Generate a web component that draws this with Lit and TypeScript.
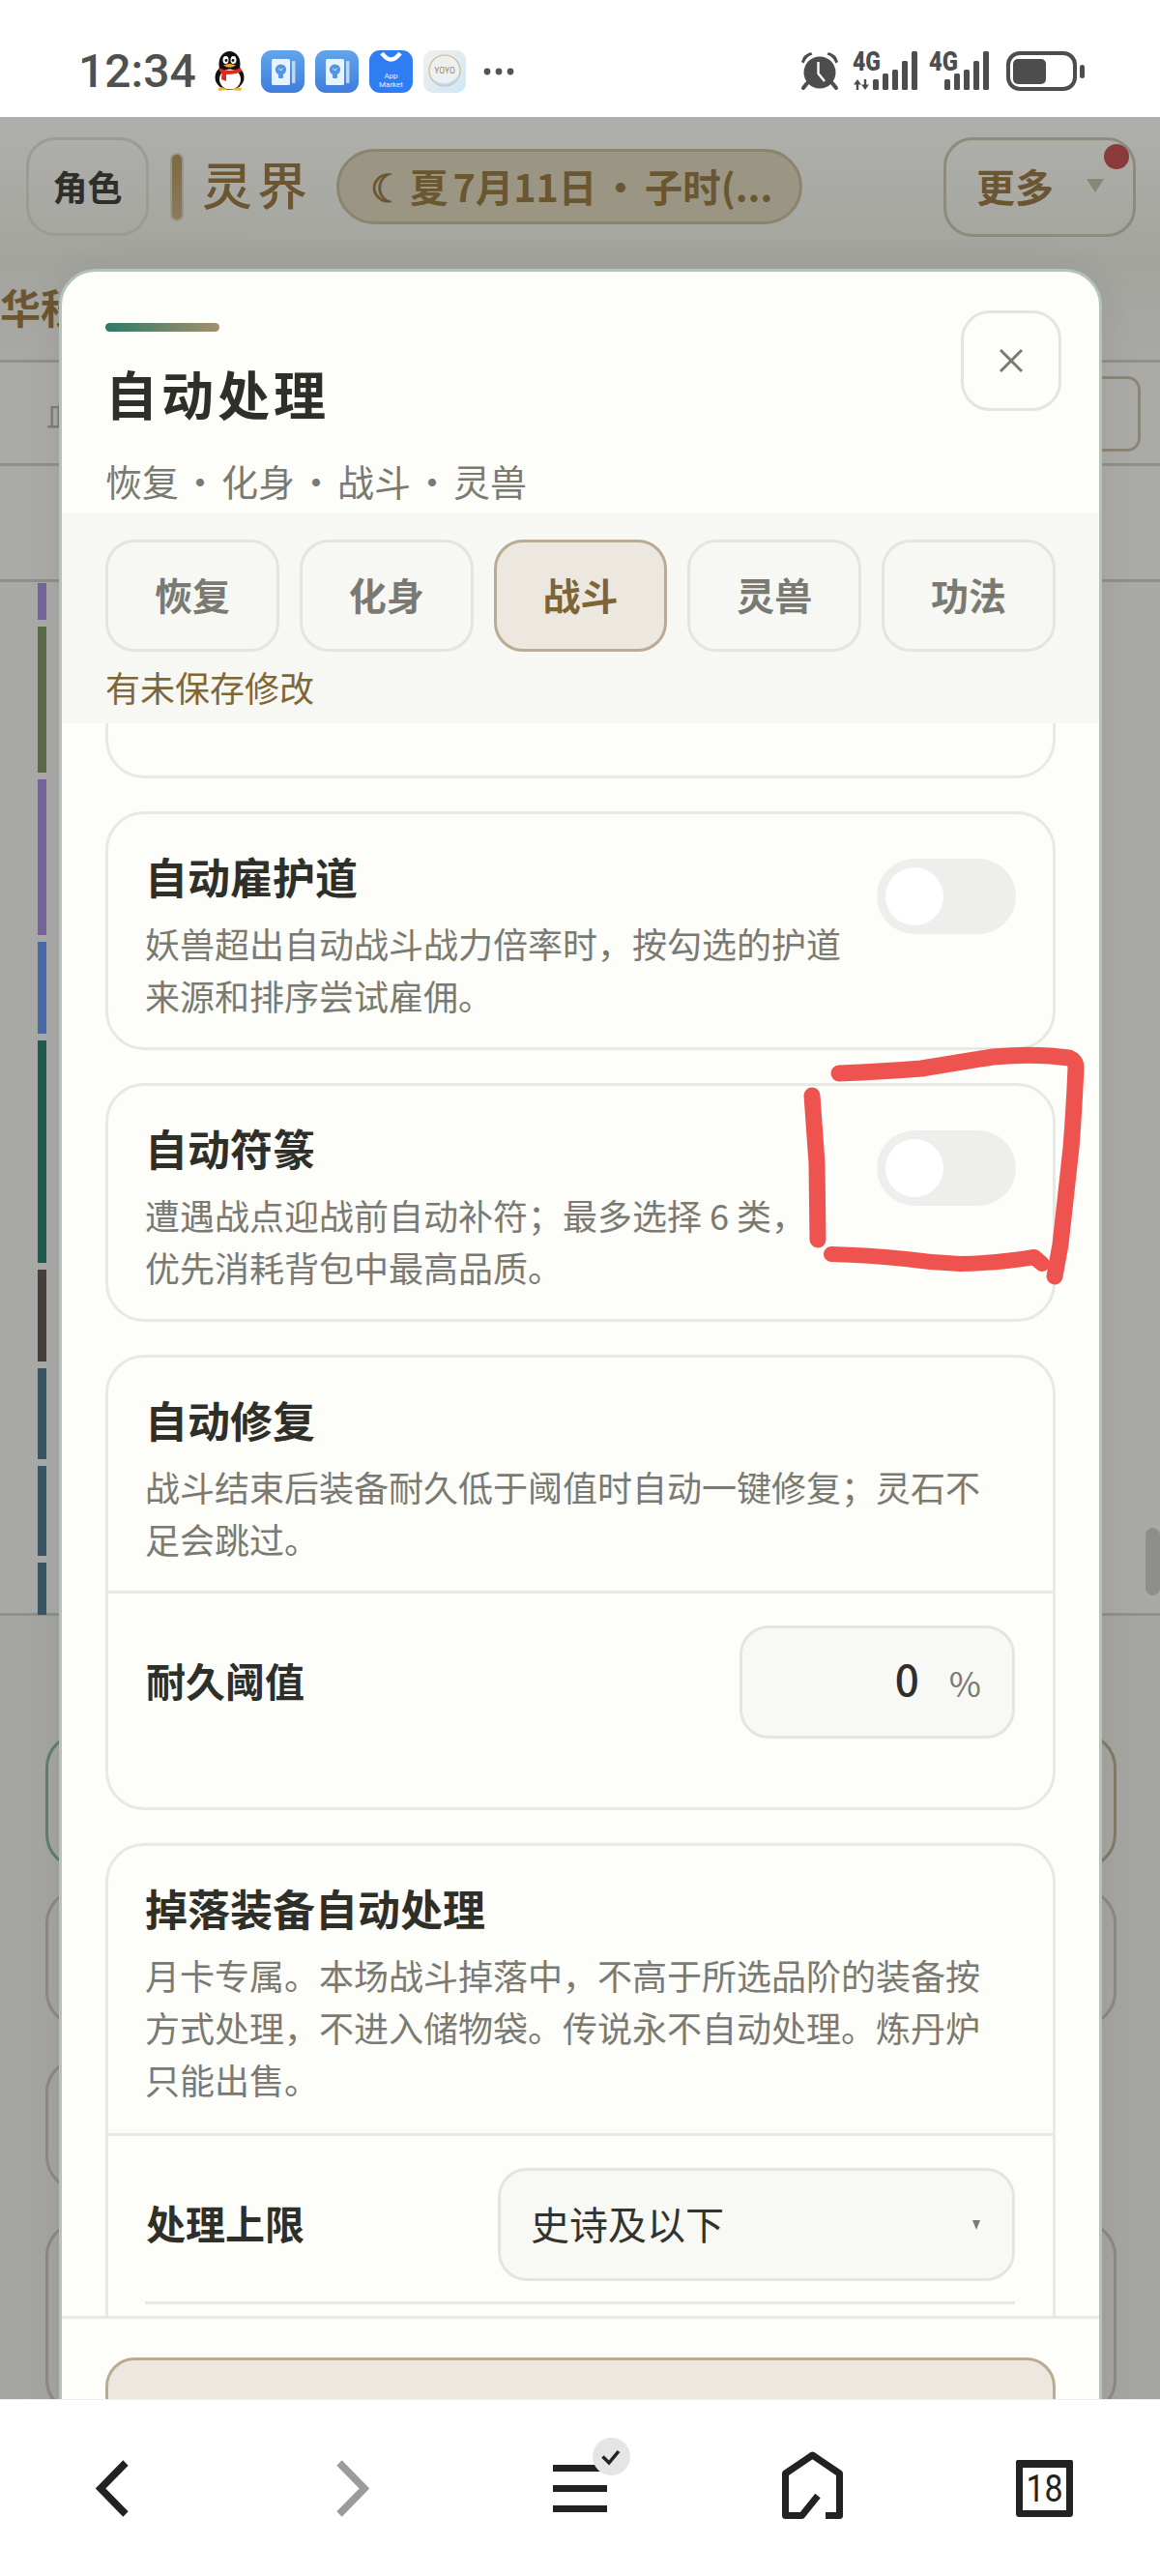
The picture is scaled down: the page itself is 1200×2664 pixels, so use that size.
import { LitElement, html, css, svg } from "lit";
import { customElement } from "lit/decorators.js";

const BARS: [number, string][] = [
  [38, "#76649e"], [151, "#5b6b47"], [161, "#76649e"], [95, "#4a6aa8"], [230, "#1f5c50"],
  [95, "#44403c"], [94, "#3a5666"], [93, "#3a5666"], [54, "#3a5666"],
];
const TABS = ["恢复", "化身", "战斗", "灵兽", "功法"];

const barsOf = (xs: number[], tops: number[]) =>
  xs.map((x, i) => svg`<rect x=${x} y=${tops[i]} width="6" height=${40 - tops[i]} rx="1.5" fill="#4d4d4d"/>`);

@customElement("app-root")
export class AppRoot extends LitElement {
  static styles = css`
    :host { display: block; width: 1200px; height: 2664px; position: relative; overflow: hidden; background: #fff;
      font-family: "Noto Sans CJK SC", "Noto Sans", sans-serif; color: #2f2f2a; }
    * { box-sizing: border-box; }
    svg { display: block; flex: none; overflow: visible; }
    .shell { display: flex; flex-direction: column; height: 2664px; }

    .status { height: 121px; flex: none; background: #fff; display: flex; align-items: center; justify-content: space-between;
      padding: 26px 78px 0 81px; }
    .st-left, .st-right { display: flex; align-items: center; }
    .time { font-family: Roboto, sans-serif; font-weight: 500; font-size: 48px; color: #505050; width: 139px; line-height: 50px; }
    .st-left .ni { margin-right: 11px; }
    .st-left .qq { margin-right: 15px; }
    .st-left .yoyo { margin-right: 18px; }
    .st-right .alarm { margin-right: 15px; }
    .st-right .sig1 { margin-right: 13px; }
    .st-right .sig2 { margin-right: 17px; }

    .stage { flex: 1; min-height: 0; position: relative; overflow: hidden; background: #a5a5a1; }

    .u-head { height: 144px; display: flex; align-items: center; padding: 0 25px 0 27px; background: linear-gradient(#afafab, #a5a5a0); }
    .u-btn { width: 127px; height: 102px; border: 3px solid #9c9c97; border-radius: 30px; display: flex; align-items: center; justify-content: center;
      font-size: 36px; font-weight: 700; color: #2e2e2a; padding-bottom: 2px; }
    .u-mark { width: 14px; height: 71px; margin-left: 22px; border-radius: 7px; background: linear-gradient(#7e6a42, #8b7a5c); border: 2px solid #9a958a; }
    .u-title { font-size: 52px; line-height: 60px; letter-spacing: 5px; color: #6b5631; margin: -6px 0 0 19px; font-weight: 500; width: 139px; }
    .u-pill { width: 482px; height: 78px; border: 3px solid #8b8570; border-radius: 39px; background: #9b9583; display: flex; align-items: center;
      padding: 0 0 3px 32px; font-size: 39.5px; word-spacing: -4px; font-weight: 700; color: #6a5630; white-space: nowrap; overflow: hidden; }
    .u-more { margin-left: auto; width: 199px; height: 103px; border: 3px solid #8f8b7c; border-radius: 30px; position: relative; display: flex; align-items: center;
      padding: 0 0 2px 31px; font-size: 40px; font-weight: 700; color: #6b5631; }
    .u-more .tri { margin-left: 34px; width: 0; height: 0; border-left: 9px solid transparent; border-right: 9px solid transparent; border-top: 14px solid #8a8577; }
    .u-more .dot { position: absolute; top: 4px; right: 4px; width: 26px; height: 26px; border-radius: 50%; background: #8a3a3a; }

    .u-tabs { height: 110px; padding: 22px 0 0 0; border-bottom: 3px solid #8f8f8b; font-size: 42px; font-weight: 700; color: #6b5631; line-height: 60px; background: linear-gradient(#a4a49f, #a8a8a4); white-space: nowrap; }
    .u-tool { height: 107px; border-bottom: 3px solid #8f8f8b; background: #aaaaa6; display: flex; align-items: center; justify-content: space-between; padding: 0 20px 0 48px; font-size: 32px; color: #7d7d78; }
    .u-tool .box { width: 60px; height: 78px; border: 3px solid #8e8674; border-radius: 14px; margin-top: 2px; }
    .u-row { height: 120px; border-bottom: 3px solid #8f8f8b; background: #aaaaa6; }
    .u-list { height: 1069px; position: relative; background: #a9a9a8; border-bottom: 3px solid #8f8f8b; padding: 1px 0 0 39px; display: flex; flex-direction: column; gap: 7px; }
    .u-bar { width: 9px; flex: none; }
    .u-scroll { position: absolute; right: 0; top: 978px; width: 15px; height: 70px; border-radius: 8px; background: #8e8e8b; }
    .u-cards { padding: 121px 45px 0 47px; display: grid; grid-template-columns: 1fr 1fr; grid-template-rows: 141px 143px 150px 211px; gap: 20px; }
    .u-card { border: 3px solid #8c8a82; border-radius: 36px; }
    .u-card.green { border-color: #5f7f72; }
    .u-card.brown { border-color: #857a68; }
    .u-card.none { border: 0; }
    .u-card.r3 { margin-top: 12px; }
    .u-card.r4 { margin-top: 11px; }

    .modal { position: absolute; left: 61px; top: 157px; width: 1079px; height: 2319px; background: #fdfdf9; border: 3px solid #b3c3bb; border-radius: 38px;
      display: flex; flex-direction: column; overflow: hidden; box-shadow: 0 0 40px rgba(0,0,0,.07); }
    .m-head { flex: none; height: 250px; display: flex; justify-content: space-between; padding: 53px 39px 0 45px; }
    .m-accent { width: 118px; height: 9px; border-radius: 5px; background: linear-gradient(90deg, #2f7a68, #a3906c); }
    .m-title { font-size: 54px; line-height: 70px; letter-spacing: 4px; font-weight: 700; margin: 29px 0 0 0; }
    .m-sub { font-size: 38px; line-height: 50px; color: #7a7a72; margin: 30px 0 0 0; white-space: pre; word-spacing: -5.5px; }
    .close { flex: none; width: 104px; height: 104px; margin-top: -13px; border: 3px solid #e5e5e0; border-radius: 30px; display: flex; align-items: center; justify-content: center; }
    .m-band { flex: none; background: #f7f7f4; height: 217px; padding: 27px 45px 0; }
    .tabs { display: grid; grid-template-columns: repeat(5, 1fr); gap: 21px; }
    .tab { height: 116px; border: 3px solid #e5e5e0; border-radius: 30px; display: flex; align-items: center; justify-content: center; padding-bottom: 5px; font-size: 39px; font-weight: 700; color: #7a7a72; }
    .tab.on { background: #ece7df; border-color: #b9ac92; color: #7d6535; }
    .dirty { font-size: 36px; line-height: 50px; color: #7e6736; margin-top: 11px; }
    .m-body { flex: 1; min-height: 0; overflow: hidden; padding: 0 45px; display: flex; flex-direction: column; gap: 34px; }
    .card { flex: none; border: 3px solid #e8e8e4; border-radius: 40px; }
    .card.cut { height: 57px; border-top: 0; border-radius: 0 0 40px 40px; }
    .c-head { display: flex; gap: 34px; padding: 34px 38px 27px 38px; }
    .c-head.more { padding-bottom: 29px; }
    .c-text { flex: 1; min-width: 0; }
    .c-title { font-size: 44px; line-height: 60px; font-weight: 700; }
    .c-desc { font-size: 36px; line-height: 54px; color: #7a7a72; margin-top: 12px; max-width: 890px; }
    .toggle { flex: none; width: 144px; height: 78px; margin-top: 12px; border-radius: 39px; background: #eeeeec; padding: 9px; }
    .knob { width: 60px; height: 60px; border-radius: 50%; background: #fff; }
    .c-row { border-top: 3px solid #e8e8e4; padding: 33px 39px 71px 39px; display: flex; justify-content: space-between; align-items: center; }
    .c-row.sel { padding-bottom: 21px; }
    .c-label { font-size: 41px; font-weight: 700; line-height: 56px; margin-top: -6px; }
    .input { width: 285px; height: 117px; background: #f8f8f5; border: 3px solid #e5e5e0; border-radius: 30px; display: flex; align-items: center; justify-content: flex-end; padding: 0 32px 0 0; }
    .input .v { font-size: 44px; font-weight: 500; line-height: 56px; color: #2f2f2a; margin: -10px 2px 0 0; }
    .input .u { font-size: 36px; color: #7a7a72; margin: -2px 0 0 29px; line-height: 56px; }
    .select { width: 535px; height: 117px; background: #f8f8f5; border: 3px solid #e5e5e0; border-radius: 30px; display: flex; align-items: center; justify-content: space-between; padding: 0 33px 4px 31px; font-size: 40px; color: #33332e; }
    .select .tri { width: 0; height: 0; border-left: 4px solid transparent; border-right: 4px solid transparent; border-top: 10px solid #7a7a72; margin-top: 4px; }
    .c-sep { height: 3px; margin: 0 39px 0 38px; background: #e8e8e4; }
    .c-rest { height: 80px; }
    .m-foot { flex: none; height: 199px; border-top: 3px solid #e8e8e4; padding: 40px 45px; }
    .save { height: 116px; background: #ece7df; border: 3px solid #b9ac92; border-radius: 30px; }

    .nav { height: 183px; flex: none; background: #fff; border-top: 1px solid #eeeeee; display: grid; grid-template-columns: repeat(5, 240px); align-items: center; justify-items: center; position: relative; }
    .mark { position: absolute; left: 0; top: 0; pointer-events: none; }
  `;

  private penguin() {
    return html`<svg class="qq" width="35" height="41" viewBox="0 0 35 41">
      <ellipse cx="17.5" cy="13" rx="11" ry="13" fill="#111"/>
      <ellipse cx="17.5" cy="27" rx="15" ry="13" fill="#111"/>
      <ellipse cx="18" cy="29" rx="11" ry="10.5" fill="#fff"/>
      <ellipse cx="13.5" cy="9" rx="3" ry="4" fill="#fff"/><ellipse cx="21.5" cy="9" rx="3" ry="4" fill="#fff"/>
      <circle cx="14" cy="9.5" r="1.4" fill="#111"/><circle cx="21" cy="9.5" r="1.4" fill="#111"/>
      <path d="M11 14.5 Q17.5 11.5 24 14.5 Q17.5 19 11 14.5Z" fill="#f5a623"/>
      <path d="M6 17 Q17.5 23 29 17 L30 21 Q24 24 14 24 L14 31 L9 29 L9.5 23 Q7 21 6 17Z" fill="#e0281e"/>
      <path d="M6 38 Q12 36 15 40 L6 41Z M20 40 Q25 36 30 38 L29 41Z" fill="#f5b72a"/>
    </svg>`;
  }

  private noteIcon() {
    return html`<svg class="ni" width="45" height="44" viewBox="0 0 45 44">
      <defs><linearGradient id="nb" x1="0" y1="0" x2="0" y2="1"><stop offset="0" stop-color="#63a5ea"/><stop offset="1" stop-color="#3f7ddb"/></linearGradient></defs>
      <rect width="45" height="44" rx="11" fill="url(#nb)"/>
      <rect x="32" y="11" width="3.5" height="23" rx="1" fill="#bcd6f5"/>
      <rect x="11" y="9" width="19" height="27" rx="1.5" fill="#eaf2fc"/>
      <circle cx="20.5" cy="20" r="5.6" fill="#4f96e6"/>
      <rect x="18" y="25" width="5" height="4" rx="1" fill="#4f96e6"/>
      <path d="M18.5 18.5 L20.5 21 L22.5 18.5" stroke="#eaf2fc" stroke-width="1" fill="none"/>
    </svg>`;
  }

  render() {
    return html`<div class="shell">
      <div class="status">
        <div class="st-left">
          <div class="time">12:34</div>
          ${this.penguin()}
          ${this.noteIcon()}
          ${this.noteIcon()}
          <svg class="ni" width="45" height="44" viewBox="0 0 45 44">
            <rect width="45" height="44" rx="11" fill="#2f7cf3"/>
            <path d="M13 3 Q22.5 16 32 3" stroke="#fff" stroke-width="4.5" fill="none"/>
            <text x="22.5" y="29" text-anchor="middle" font-family="Roboto, sans-serif" font-size="8" fill="#e6f0ff">App</text>
            <text x="22.5" y="38" text-anchor="middle" font-family="Roboto, sans-serif" font-size="8" fill="#e6f0ff">Market</text>
          </svg>
          <svg class="yoyo" width="44" height="44" viewBox="0 0 44 44">
            <defs><linearGradient id="yb" x1="0" y1="0" x2="1" y2="1"><stop offset="0" stop-color="#f2f0ea"/><stop offset="1" stop-color="#cfe6f8"/></linearGradient></defs>
            <rect width="44" height="44" rx="10" fill="url(#yb)"/>
            <circle cx="22" cy="21" r="16" fill="#eef0ef" stroke="#c9b98d" stroke-width="1.2"/>
            <path d="M8 28 Q22 42 37 26 Q34 37 22 37 Q12 37 8 28Z" fill="#bcd8ee"/>
            <text x="22" y="24" text-anchor="middle" font-family="Roboto, sans-serif" font-size="8.5" fill="#8f8a70">YOYO</text>
          </svg>
          <svg width="32" height="10" viewBox="0 0 32 10"><circle cx="4" cy="5" r="3.4" fill="#555"/><circle cx="16" cy="5" r="3.4" fill="#555"/><circle cx="28" cy="5" r="3.4" fill="#555"/></svg>
        </div>
        <div class="st-right">
          <svg class="alarm" width="40" height="41" viewBox="0 0 40 41">
            <circle cx="20" cy="22" r="16.5" fill="#4d4d4d"/>
            <path d="M18.5 11 V23 L25 31" stroke="#fff" stroke-width="2.4" fill="none"/>
            <path d="M1 11 Q3 3 11 1 L12.5 3.5 Q6 5.5 3.5 12.5Z M39 11 Q37 3 29 1 L27.5 3.5 Q34 5.5 36.5 12.5Z" fill="#4d4d4d"/>
            <path d="M7 33 L3 38" stroke="#4d4d4d" stroke-width="4" stroke-linecap="round"/><path d="M33 33 L37 38" stroke="#4d4d4d" stroke-width="4" stroke-linecap="round"/>
          </svg>
          <svg class="sig1" width="66" height="41" viewBox="0 0 66 41">
            <text x="-1" y="20" font-family="Roboto, sans-serif" font-weight="900" font-size="27" textLength="29" lengthAdjust="spacingAndGlyphs" fill="#4d4d4d">4G</text>
            <path d="M4 29 L0 34.5 H2.8 V40 H5.2 V34.5 H8 Z" fill="#4d4d4d"/>
            <path d="M12 40 L16 34.5 H13.2 V29 H10.8 V34.5 H8 Z" fill="#4d4d4d"/>
            ${barsOf([20, 30, 40, 50, 60], [29, 23, 19, 10, 0])}
          </svg>
          <svg class="sig2" width="62" height="41" viewBox="0 0 62 41">
            <text x="-1" y="20" font-family="Roboto, sans-serif" font-weight="900" font-size="27" textLength="30" lengthAdjust="spacingAndGlyphs" fill="#4d4d4d">4G</text>
            ${barsOf([15, 25, 35, 45, 55], [29, 23, 19, 10, 0])}
          </svg>
          <svg width="81" height="41" viewBox="0 0 81 41">
            <rect x="2" y="2" width="69" height="37" rx="12" fill="none" stroke="#4d4d4d" stroke-width="4"/>
            <rect x="7" y="8" width="34" height="26" rx="5" fill="#4d4d4d"/>
            <rect x="76" y="14" width="5" height="14" rx="2.5" fill="#4d4d4d"/>
          </svg>
        </div>
      </div>

      <div class="stage">
        <div class="u-head">
          <div class="u-btn">角色</div>
          <div class="u-mark"></div>
          <div class="u-title">灵界</div>
          <div class="u-pill">☾ 夏 7月11日 · 子时(...</div>
          <div class="u-more">更多<span class="tri"></span><span class="dot"></span></div>
        </div>
        <div class="u-tabs">华秋</div>
        <div class="u-tool"><span>血</span><span class="box"></span></div>
        <div class="u-row"></div>
        <div class="u-list">
          ${BARS.map(([h, c]) => html`<div class="u-bar" style="height:${h}px;background:${c}"></div>`)}
          <div class="u-scroll"></div>
        </div>
        <div class="u-cards">
          <div class="u-card green"></div><div class="u-card brown"></div>
          <div class="u-card"></div><div class="u-card"></div>
          <div class="u-card r3"></div><div class="u-card none"></div>
          <div class="u-card r4"></div><div class="u-card r4"></div>
        </div>

        <div class="modal">
          <div class="m-head">
            <div>
              <div class="m-accent"></div>
              <div class="m-title">自动处理</div>
              <div class="m-sub">恢复 · 化身 · 战斗 · 灵兽</div>
            </div>
            <div class="close">
              <svg width="24" height="24" viewBox="0 0 24 24"><path d="M1 1 L23 23 M23 1 L1 23" stroke="#7a7a72" stroke-width="3"/></svg>
            </div>
          </div>
          <div class="m-band">
            <div class="tabs">${TABS.map((t, i) => html`<div class="tab ${i === 2 ? "on" : ""}">${t}</div>`)}</div>
            <div class="dirty">有未保存修改</div>
          </div>
          <div class="m-body">
            <div class="card cut"></div>
            <div class="card">
              <div class="c-head">
                <div class="c-text">
                  <div class="c-title">自动雇护道</div>
                  <div class="c-desc">妖兽超出自动战斗战力倍率时，按勾选的护道来源和排序尝试雇佣。</div>
                </div>
                <div class="toggle"><div class="knob"></div></div>
              </div>
            </div>
            <div class="card">
              <div class="c-head">
                <div class="c-text">
                  <div class="c-title">自动符篆</div>
                  <div class="c-desc">遭遇战点迎战前自动补符；最多选择 6 类，<br>优先消耗背包中最高品质。</div>
                </div>
                <div class="toggle"><div class="knob"></div></div>
              </div>
            </div>
            <div class="card">
              <div class="c-head">
                <div class="c-text">
                  <div class="c-title">自动修复</div>
                  <div class="c-desc">战斗结束后装备耐久低于阈值时自动一键修复；灵石不足会跳过。</div>
                </div>
              </div>
              <div class="c-row">
                <div class="c-label">耐久阈值</div>
                <div class="input"><span class="v">0</span><span class="u">%</span></div>
              </div>
            </div>
            <div class="card">
              <div class="c-head more">
                <div class="c-text">
                  <div class="c-title">掉落装备自动处理</div>
                  <div class="c-desc">月卡专属。本场战斗掉落中，不高于所选品阶的装备按方式处理，不进入储物袋。传说永不自动处理。炼丹炉只能出售。</div>
                </div>
              </div>
              <div class="c-row sel">
                <div class="c-label">处理上限</div>
                <div class="select"><span>史诗及以下</span><span class="tri"></span></div>
              </div>
              <div class="c-sep"></div>
              <div class="c-rest"></div>
            </div>
          </div>
          <div class="m-foot"><div class="save"></div></div>
        </div>
      </div>

      <div class="nav">
        <svg width="100" height="100" viewBox="0 0 100 100"><path d="M60 24 L34 50.5 L60 77" fill="none" stroke="#222" stroke-width="7.5"/></svg>
        <svg width="100" height="100" viewBox="0 0 100 100"><path d="M41 24 L67 50.5 L41 77" fill="none" stroke="#9b9b9b" stroke-width="7.5"/></svg>
        <svg width="100" height="100" viewBox="0 0 100 100">
          <rect x="22" y="26" width="56" height="7" fill="#222"/><rect x="22" y="47" width="56" height="7" fill="#222"/><rect x="22" y="68" width="56" height="7" fill="#222"/>
          <circle cx="82.5" cy="17.5" r="19.5" fill="#e5e5e5"/>
          <path d="M73.5 17.5 L80 24 L90 12" fill="none" stroke="#222" stroke-width="3.5"/>
        </svg>
        <svg width="100" height="100" viewBox="0 0 100 100"><path d="M64 78.5 H78.5 V35 L50.5 16 L22.5 35 V78.5 H39.5 L56 58" fill="none" stroke="#222" stroke-width="7" stroke-linejoin="round"/></svg>
        <svg width="100" height="100" viewBox="0 0 100 100">
          <rect x="24.5" y="24.5" width="52" height="52" fill="none" stroke="#222" stroke-width="7" stroke-linejoin="round"/>
          <rect x="21" y="21" width="59" height="8" rx="2" fill="#222"/>
          <text x="50.5" y="64" text-anchor="middle" font-family="Roboto, sans-serif" font-size="38" textLength="38" lengthAdjust="spacingAndGlyphs" fill="#222">18</text>
        </svg>
      </div>
    </div>
    <svg class="mark" width="1200" height="2664" viewBox="0 0 1200 2664">
      <g fill="none" stroke="#ef534f" stroke-linecap="round" stroke-linejoin="round">
        <path d="M868 1110 Q915 1108 953 1105 Q990 1099 1027 1093 Q1060 1090 1087 1092 L1106 1094 Q1113 1097 1113 1104 Q1111 1150 1108 1187 L1097 1287 L1091 1320" stroke-width="17"/>
        <path d="M840 1133 L845 1203 L846 1282" stroke-width="17"/>
        <path d="M860 1297 Q900 1298 937 1302 Q965 1306 993 1307 Q1035 1306 1070 1300 L1078 1307" stroke-width="16"/>
      </g>
    </svg>`;
  }
}
